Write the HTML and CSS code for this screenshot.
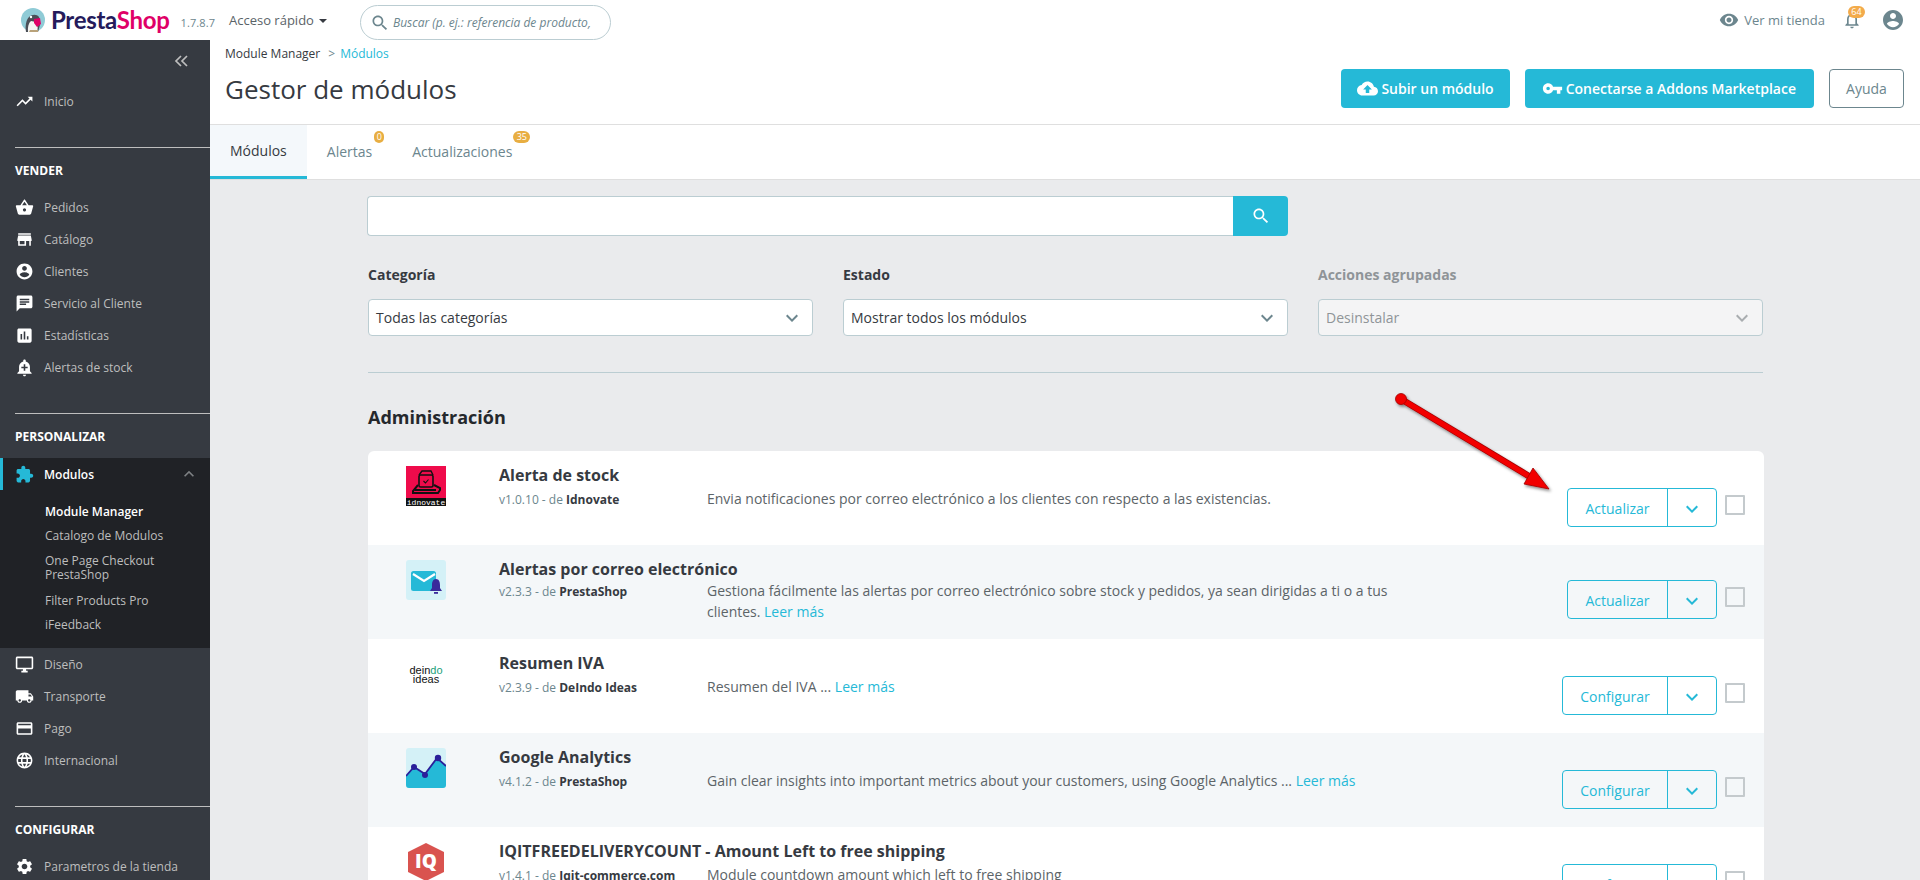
FILE: index.html
```html
<!DOCTYPE html>
<html lang="es">
<head>
<meta charset="utf-8">
<title>Gestor de módulos</title>
<link rel="stylesheet" href="styles.css">
</head>
<body>
<svg class="sprite" width="0" height="0" aria-hidden="true">
  <symbol id="i-trend" viewBox="0 0 24 24"><path d="M16 6l2.29 2.29-4.88 4.88-4-4L2 16.59 3.41 18l6-6 4 4 6.3-6.29L22 12V6z"/></symbol>
  <symbol id="i-basket" viewBox="0 0 24 24"><path d="M17.21 9l-4.38-6.56c-.19-.28-.51-.42-.83-.42-.32 0-.64.14-.83.43L6.79 9H2c-.55 0-1 .45-1 1 0 .09.01.18.04.27l2.54 9.27c.23.84 1 1.46 1.92 1.46h13c.92 0 1.69-.62 1.93-1.46l2.54-9.27L23 10c0-.55-.45-1-1-1h-4.79zM9 9l3-4.4L15 9H9zm3 8c-1.1 0-2-.9-2-2s.9-2 2-2 2 .9 2 2-.9 2-2 2z"/></symbol>
  <symbol id="i-store" viewBox="0 0 24 24"><path d="M20 4H4v2h16V4zm1 10v-2l-1-5H4l-1 5v2h1v6h10v-6h4v6h2v-6h1zm-9 4H6v-4h6v4z"/></symbol>
  <symbol id="i-account" viewBox="0 0 24 24"><path d="M12 2C6.48 2 2 6.48 2 12s4.48 10 10 10 10-4.48 10-10S17.52 2 12 2zm0 3c1.66 0 3 1.34 3 3s-1.34 3-3 3-3-1.34-3-3 1.34-3 3-3zm0 14.2c-2.5 0-4.71-1.28-6-3.22.03-1.99 4-3.08 6-3.08 1.99 0 5.97 1.09 6 3.08-1.29 1.94-3.5 3.22-6 3.22z"/></symbol>
  <symbol id="i-chat" viewBox="0 0 24 24"><path d="M20 2H4c-1.1 0-1.99.9-1.99 2L2 22l4-4h14c1.1 0 2-.9 2-2V4c0-1.1-.9-2-2-2zM6 9h12v2H6V9zm8 5H6v-2h8v2zm4-6H6V6h12v2z"/></symbol>
  <symbol id="i-stats" viewBox="0 0 24 24"><path d="M19 3H5c-1.1 0-2 .9-2 2v14c0 1.1.9 2 2 2h14c1.1 0 2-.9 2-2V5c0-1.1-.9-2-2-2zM9 17H7v-7h2v7zm4 0h-2V7h2v10zm4 0h-2v-4h2v4z"/></symbol>
  <symbol id="i-alert" viewBox="0 0 24 24"><path d="M10.01 21.01c0 1.1.89 1.99 1.99 1.99s1.99-.89 1.99-1.99h-3.98zm8.87-4.19V11c0-3.25-2.25-5.97-5.29-6.69v-.72C13.59 2.71 12.88 2 12 2s-1.59.71-1.59 1.59v.72C7.37 5.03 5.12 7.75 5.12 11v5.82L3 18.94V20h18v-1.06l-2.12-2.12zM16 13.01h-3v3h-2v-3H8V11h3V8h2v3h3v2.01z"/></symbol>
  <symbol id="i-puzzle" viewBox="0 0 24 24"><path d="M20.5 11H19V7c0-1.1-.9-2-2-2h-4V3.5C13 2.12 11.88 1 10.5 1S8 2.12 8 3.5V5H4c-1.1 0-1.99.9-1.99 2v3.8H3.5c1.49 0 2.7 1.21 2.7 2.7s-1.21 2.7-2.7 2.7H2V20c0 1.1.9 2 2 2h3.8v-1.5c0-1.49 1.21-2.7 2.7-2.7 1.49 0 2.7 1.21 2.7 2.7V22H17c1.1 0 2-.9 2-2v-4h1.5c1.38 0 2.5-1.12 2.5-2.5S21.88 11 20.5 11z"/></symbol>
  <symbol id="i-desktop" viewBox="0 0 24 24"><path d="M21 2H3c-1.1 0-2 .9-2 2v12c0 1.1.9 2 2 2h7v2H8v2h8v-2h-2v-2h7c1.1 0 2-.9 2-2V4c0-1.1-.9-2-2-2zm0 14H3V4h18v12z"/></symbol>
  <symbol id="i-truck" viewBox="0 0 24 24"><path d="M20 8h-3V4H3c-1.1 0-2 .9-2 2v11h2c0 1.66 1.34 3 3 3s3-1.34 3-3h6c0 1.66 1.34 3 3 3s3-1.34 3-3h2v-5l-3-4zM6 18.5c-.83 0-1.5-.67-1.5-1.5s.67-1.5 1.5-1.5 1.5.67 1.5 1.5-.67 1.5-1.5 1.5zm13.5-9l1.96 2.5H17V9.5h2.5zm-1.5 9c-.83 0-1.5-.67-1.5-1.5s.67-1.5 1.5-1.5 1.5.67 1.5 1.5-.67 1.5-1.5 1.5z"/></symbol>
  <symbol id="i-card" viewBox="0 0 24 24"><path d="M20 4H4c-1.11 0-1.99.89-1.99 2L2 18c0 1.11.89 2 2 2h16c1.11 0 2-.89 2-2V6c0-1.11-.89-2-2-2zm0 14H4v-6h16v6zm0-10H4V6h16v2z"/></symbol>
  <symbol id="i-globe" viewBox="0 0 24 24"><path d="M11.99 2C6.47 2 2 6.48 2 12s4.47 10 9.99 10C17.52 22 22 17.52 22 12S17.52 2 11.99 2zm6.93 6h-2.95c-.32-1.25-.78-2.45-1.38-3.56 1.84.63 3.37 1.91 4.33 3.56zM12 4.04c.83 1.2 1.48 2.53 1.91 3.96h-3.82c.43-1.43 1.08-2.76 1.91-3.96zM4.26 14C4.1 13.36 4 12.69 4 12s.1-1.36.26-2h3.38c-.08.66-.14 1.32-.14 2 0 .68.06 1.34.14 2H4.26zm.82 2h2.95c.32 1.25.78 2.45 1.38 3.56-1.84-.63-3.37-1.9-4.33-3.56zm2.95-8H5.08c.96-1.66 2.49-2.93 4.33-3.56C8.81 5.55 8.35 6.75 8.03 8zM12 19.96c-.83-1.2-1.48-2.53-1.91-3.96h3.82c-.43 1.43-1.08 2.76-1.91 3.96zM14.34 14H9.66c-.09-.66-.16-1.32-.16-2 0-.68.07-1.35.16-2h4.68c.09.65.16 1.32.16 2 0 .68-.07 1.34-.16 2zm.25 5.56c.6-1.11 1.06-2.31 1.38-3.56h2.95c-.96 1.65-2.49 2.93-4.33 3.56zM16.36 14c.08-.66.14-1.32.14-2 0-.68-.06-1.34-.14-2h3.38c.16.64.26 1.31.26 2s-.1 1.36-.26 2h-3.38z"/></symbol>
  <symbol id="i-gear" viewBox="0 0 24 24"><path d="M19.14 12.94c.04-.3.06-.61.06-.94 0-.32-.02-.64-.07-.94l2.03-1.58c.18-.14.23-.41.12-.61l-1.92-3.32c-.12-.22-.37-.29-.59-.22l-2.39.96c-.5-.38-1.03-.7-1.62-.94l-.36-2.54c-.04-.24-.24-.41-.48-.41h-3.84c-.24 0-.43.17-.47.41l-.36 2.54c-.59.24-1.13.57-1.62.94l-2.39-.96c-.22-.08-.47 0-.59.22L2.74 8.87c-.12.21-.08.47.12.61l2.03 1.58c-.05.3-.09.63-.09.94s.02.64.07.94l-2.03 1.58c-.18.14-.23.41-.12.61l1.92 3.32c.12.22.37.29.59.22l2.39-.96c.5.38 1.03.7 1.62.94l.36 2.54c.05.24.24.41.48.41h3.84c.24 0 .44-.17.47-.41l.36-2.54c.59-.24 1.13-.56 1.62-.94l2.39.96c.22.08.47 0 .59-.22l1.92-3.32c.12-.22.07-.47-.12-.61l-2.01-1.58zM12 15.6c-1.98 0-3.6-1.62-3.6-3.6s1.62-3.6 3.6-3.6 3.6 1.62 3.6 3.6-1.62 3.6-3.6 3.6z"/></symbol>
  <symbol id="i-cloud" viewBox="0 0 24 24"><path d="M19.35 10.04C18.67 6.59 15.64 4 12 4 9.11 4 6.6 5.64 5.35 8.04 2.34 8.36 0 10.91 0 14c0 3.31 2.69 6 6 6h13c2.76 0 5-2.24 5-5 0-2.64-2.05-4.78-4.65-4.96zM14 13v4h-4v-4H7l5-5 5 5h-3z"/></symbol>
  <symbol id="i-key" viewBox="0 0 24 24"><path d="M12.65 10C11.83 7.67 9.61 6 7 6c-3.31 0-6 2.69-6 6s2.69 6 6 6c2.61 0 4.83-1.67 5.65-4H17v4h4v-4h2v-4H12.65zM7 14c-1.1 0-2-.9-2-2s.9-2 2-2 2 .9 2 2-.9 2-2 2z"/></symbol>
  <symbol id="i-eye" viewBox="0 0 24 24"><path d="M12 4.5C7 4.5 2.73 7.61 1 12c1.73 4.39 6 7.5 11 7.5s9.27-3.11 11-7.5c-1.73-4.39-6-7.5-11-7.5zM12 17c-2.76 0-5-2.24-5-5s2.24-5 5-5 5 2.24 5 5-2.24 5-5 5zm0-8c-1.66 0-3 1.34-3 3s1.34 3 3 3 3-1.34 3-3-1.34-3-3-3z"/></symbol>
  <symbol id="i-bell" viewBox="0 0 24 24"><path d="M12 22c1.1 0 2-.9 2-2h-4c0 1.1.9 2 2 2zm6-6v-5c0-3.07-1.63-5.64-4.5-6.32V4c0-.83-.67-1.5-1.5-1.5s-1.5.67-1.5 1.5v.68C7.64 5.36 6 7.92 6 11v5l-2 2v1h16v-1l-2-2zm-2 1H8v-6c0-2.48 1.51-4.5 4-4.5s4 2.02 4 4.5v6z"/></symbol>
  <symbol id="i-search" viewBox="0 0 24 24"><path d="M15.5 14h-.79l-.28-.27C15.41 12.59 16 11.11 16 9.5 16 5.91 13.09 3 9.5 3S3 5.91 3 9.5 5.91 16 9.5 16c1.61 0 3.09-.59 4.23-1.57l.27.28v.79l5 4.99L20.49 19l-4.99-5zm-6 0C7.01 14 5 11.99 5 9.5S7.01 5 9.5 5 14 7.01 14 9.5 11.99 14 9.5 14z"/></symbol>
  <symbol id="i-down" viewBox="0 0 24 24"><path d="M7.41 8.59L12 13.17l4.59-4.58L18 10l-6 6-6-6z"/></symbol>
  <symbol id="i-up" viewBox="0 0 24 24"><path d="M7.41 15.41L12 10.83l4.59 4.58L18 14l-6-6-6 6z"/></symbol>
</svg>

<header class="topbar">
  <div class="brand">
    <svg class="bird" viewBox="0 0 24 24" aria-hidden="true">
      <circle cx="12" cy="12" r="12" fill="#8fcbd6"/>
      <path d="M5 24c-1-6 0-12 3-15 3-3 8-3 10 0 1 2 1 5 1 8l-2 7z" fill="#4b4f57"/>
      <path d="M7 24c-.5-5 .5-9 3-11l5 1c2 3 2 7 1 10z" fill="#f4f4f2"/>
      <path d="M13 11l6-1 1 6-4 3-3-4z" fill="#df0067"/>
      <circle cx="10" cy="9" r="1.2" fill="#fff"/>
      <path d="M9 22h8v2H8z" fill="#b9a27a"/>
    </svg>
    <span class="wordmark"><span class="wm-a">Presta</span><span class="wm-b">Shop</span></span>
    <span class="version">1.7.8.7</span>
  </div>
  <div class="quick">Acceso rápido<span class="caret"></span></div>
  <label class="top-search">
    <svg class="ic ic-top-search"><use href="#i-search"/></svg>
    <input class="top-input" type="text" placeholder="Buscar (p. ej.: referencia de producto,">
  </label>
  <div class="top-right">
    <div class="shop-link"><svg class="ic ic-20"><use href="#i-eye"/></svg><span>Ver mi tienda</span></div>
    <div class="bell"><svg class="ic ic-20"><use href="#i-bell"/></svg><span class="bell-badge">64</span></div>
    <svg class="ic ic-user"><use href="#i-account"/></svg>
  </div>
</header>

<div class="shell">
  <nav class="sidebar">
    <div class="collapse">
      <svg class="collapse-ic" viewBox="0 0 16 12" aria-hidden="true"><path d="M7 1L2 6l5 5M13 1L8 6l5 5" fill="none" stroke="#bebebe" stroke-width="1.7"/></svg>
    </div>
    <a class="nav-item"><svg class="ic nav-ic"><use href="#i-trend"/></svg>Inicio</a>

    <div class="nav-title">VENDER</div>
    <a class="nav-item"><svg class="ic nav-ic"><use href="#i-basket"/></svg>Pedidos</a>
    <a class="nav-item"><svg class="ic nav-ic"><use href="#i-store"/></svg>Catálogo</a>
    <a class="nav-item"><svg class="ic nav-ic"><use href="#i-account"/></svg>Clientes</a>
    <a class="nav-item"><svg class="ic nav-ic"><use href="#i-chat"/></svg>Servicio al Cliente</a>
    <a class="nav-item"><svg class="ic nav-ic"><use href="#i-stats"/></svg>Estadísticas</a>
    <a class="nav-item"><svg class="ic nav-ic"><use href="#i-alert"/></svg>Alertas de stock</a>

    <div class="nav-title">PERSONALIZAR</div>
    <div class="nav-open">
      <a class="nav-item nav-active"><svg class="ic nav-ic nav-ic-on"><use href="#i-puzzle"/></svg>Modulos<svg class="ic nav-chev"><use href="#i-up"/></svg></a>
      <ul class="subnav">
        <li class="sub sub-on">Module Manager</li>
        <li class="sub">Catalogo de Modulos</li>
        <li class="sub sub-two">One Page Checkout PrestaShop</li>
        <li class="sub">Filter Products Pro</li>
        <li class="sub">iFeedback</li>
      </ul>
    </div>
    <a class="nav-item"><svg class="ic nav-ic"><use href="#i-desktop"/></svg>Diseño</a>
    <a class="nav-item"><svg class="ic nav-ic"><use href="#i-truck"/></svg>Transporte</a>
    <a class="nav-item"><svg class="ic nav-ic"><use href="#i-card"/></svg>Pago</a>
    <a class="nav-item"><svg class="ic nav-ic"><use href="#i-globe"/></svg>Internacional</a>

    <div class="nav-title">CONFIGURAR</div>
    <a class="nav-item"><svg class="ic nav-ic"><use href="#i-gear"/></svg>Parametros de la tienda</a>
  </nav>

  <main class="main">
    <section class="page-head">
      <div class="head-left">
        <div class="crumbs"><span>Module Manager</span><span class="crumb-sep">&gt;</span><a class="crumb-on">Módulos</a></div>
        <h1 class="title">Gestor de módulos</h1>
      </div>
      <div class="head-actions">
        <a class="btn-solid"><svg class="ic ic-btn"><use href="#i-cloud"/></svg>Subir un módulo</a>
        <a class="btn-solid btn-wide"><svg class="ic ic-btn"><use href="#i-key"/></svg>Conectarse a Addons Marketplace</a>
        <a class="btn-outline">Ayuda</a>
      </div>
    </section>

    <section class="tabs">
      <a class="tab tab-on">Módulos</a>
      <a class="tab">Alertas<span class="tab-badge tab-badge-s">0</span></a>
      <a class="tab">Actualizaciones<span class="tab-badge">35</span></a>
    </section>

    <section class="content">
      <div class="search-row">
        <input class="search-input" type="text" aria-label="Buscar">
        <button class="search-btn" aria-label="Buscar"><svg class="ic ic-20"><use href="#i-search"/></svg></button>
      </div>

      <div class="filters">
        <div class="filter">
          <div class="filter-label">Categoría</div>
          <div class="select"><span>Todas las categorías</span><svg class="ic sel-chev"><use href="#i-down"/></svg></div>
        </div>
        <div class="filter">
          <div class="filter-label">Estado</div>
          <div class="select"><span>Mostrar todos los módulos</span><svg class="ic sel-chev"><use href="#i-down"/></svg></div>
        </div>
        <div class="filter filter-off">
          <div class="filter-label">Acciones agrupadas</div>
          <div class="select"><span>Desinstalar</span><svg class="ic sel-chev"><use href="#i-down"/></svg></div>
        </div>
      </div>

      <h2 class="group-title">Administración</h2>

      <div class="mods">
        <article class="mod">
          <svg class="mod-logo" viewBox="0 0 40 40" aria-hidden="true">
            <rect width="40" height="40" fill="#ef0b4b"/>
            <rect y="32" width="40" height="8" fill="#111"/>
            <rect x="13" y="9" width="14" height="12" rx="1.500" fill="none" stroke="#111" stroke-width="1.600"/>
            <path d="M13 9l3-4h9l2 4" fill="none" stroke="#111" stroke-width="1.400"/>
            <path d="M17.500 15l2 2 3-3.500" fill="none" stroke="#111" stroke-width="1.100"/>
            <path d="M12 19l-5 6v2h25l2-3v-2l-6-3M9 24h21" fill="none" stroke="#111" stroke-width="2"/>
            <text x="20" y="38.600" class="logo-idn">idnovate</text>
          </svg>
          <div class="mod-body">
            <h3 class="mod-name">Alerta de stock</h3>
            <div class="mod-sub">
              <div class="mod-ver">v1.0.10 - de <b>Idnovate</b></div>
              <p class="mod-desc">Envia notificaciones por correo electrónico a los clientes con respecto a las existencias.</p>
            </div>
          </div>
          <div class="mod-act">
            <div class="split"><a class="split-main split-up">Actualizar</a><a class="split-more"><svg class="ic split-chev"><use href="#i-down"/></svg></a></div>
            <span class="check"></span>
          </div>
        </article>

        <article class="mod mod-alt mod-tight">
          <svg class="mod-logo" viewBox="0 0 40 40" aria-hidden="true">
            <rect width="40" height="40" rx="3" fill="#d4f1f7"/>
            <rect x="5" y="11" width="25" height="20" rx="2.500" fill="#25b9d7"/>
            <path d="M7 14l11 7 11-7" fill="none" stroke="#fff" stroke-width="2.200"/>
            <path d="M30 19c3 0 4 3 4 6v3l2 3H24l2-3v-3c0-3 1-6 4-6z" fill="#3a2a9b"/>
            <rect x="28" y="32" width="4" height="1.800" fill="#3a2a9b"/>
          </svg>
          <div class="mod-body">
            <h3 class="mod-name">Alertas por correo electrónico</h3>
            <div class="mod-sub">
              <div class="mod-ver">v2.3.3 - de <b>PrestaShop</b></div>
              <p class="mod-desc">Gestiona fácilmente las alertas por correo electrónico sobre stock y pedidos, ya sean dirigidas a ti o a tus clientes. <a class="more">Leer más</a></p>
            </div>
          </div>
          <div class="mod-act">
            <div class="split"><a class="split-main split-up">Actualizar</a><a class="split-more"><svg class="ic split-chev"><use href="#i-down"/></svg></a></div>
            <span class="check"></span>
          </div>
        </article>

        <article class="mod">
          <svg class="mod-logo" viewBox="0 0 40 40" aria-hidden="true">
            <text x="20" y="20" class="logo-dei">dein<tspan class="logo-dei-g">do</tspan></text>
            <text x="20" y="28.500" class="logo-dei">ideas</text>
          </svg>
          <div class="mod-body">
            <h3 class="mod-name">Resumen IVA</h3>
            <div class="mod-sub">
              <div class="mod-ver">v2.3.9 - de <b>DeIndo Ideas</b></div>
              <p class="mod-desc">Resumen del IVA ... <a class="more">Leer más</a></p>
            </div>
          </div>
          <div class="mod-act">
            <div class="split"><a class="split-main">Configurar</a><a class="split-more"><svg class="ic split-chev"><use href="#i-down"/></svg></a></div>
            <span class="check"></span>
          </div>
        </article>

        <article class="mod mod-alt">
          <svg class="mod-logo" viewBox="0 0 40 40" aria-hidden="true">
            <rect width="40" height="40" rx="3" fill="#d4f1f7"/>
            <path d="M0 28l8-9 11 7 12-16 9 8v19a3 3 0 0 1-3 3H3a3 3 0 0 1-3-3z" fill="#25b9d7"/>
            <path d="M0 28l8-9 11 7 12-16 9 8" fill="none" stroke="#2a1f9a" stroke-width="1.800"/>
            <circle cx="8" cy="19" r="3" fill="#2a1f9a"/><circle cx="19" cy="27" r="3" fill="#2a1f9a"/><circle cx="32" cy="10" r="3.200" fill="#2a1f9a"/>
          </svg>
          <div class="mod-body">
            <h3 class="mod-name">Google Analytics</h3>
            <div class="mod-sub">
              <div class="mod-ver">v4.1.2 - de <b>PrestaShop</b></div>
              <p class="mod-desc">Gain clear insights into important metrics about your customers, using Google Analytics ... <a class="more">Leer más</a></p>
            </div>
          </div>
          <div class="mod-act">
            <div class="split"><a class="split-main">Configurar</a><a class="split-more"><svg class="ic split-chev"><use href="#i-down"/></svg></a></div>
            <span class="check"></span>
          </div>
        </article>

        <article class="mod">
          <svg class="mod-logo" viewBox="0 0 40 40" aria-hidden="true">
            <path d="M20 1l18 9v20l-18 9-18-9V10z" fill="#d9534f"/>
            <text x="20" y="26" class="logo-iq">IQ</text>
          </svg>
          <div class="mod-body">
            <h3 class="mod-name">IQITFREEDELIVERYCOUNT - Amount Left to free shipping</h3>
            <div class="mod-sub">
              <div class="mod-ver">v1.4.1 - de <b>Iqit-commerce.com</b></div>
              <p class="mod-desc">Module countdown amount which left to free shipping</p>
            </div>
          </div>
          <div class="mod-act">
            <div class="split"><a class="split-main">Configurar</a><a class="split-more"><svg class="ic split-chev"><use href="#i-down"/></svg></a></div>
            <span class="check"></span>
          </div>
        </article>
      </div>
    </section>
  </main>
</div>

<svg class="arrow" viewBox="0 0 1920 880" aria-hidden="true">
  <defs><filter id="ashadow" x="-10%" y="-10%" width="120%" height="120%"><feDropShadow dx="1.500" dy="2" stdDeviation="1.500" flood-color="#000" flood-opacity=".45"/></filter></defs>
  <g filter="url(#ashadow)">
    <path d="M1401 399L1532 478" stroke="#a00000" stroke-width="6.500" fill="none"/>
    <path d="M1401 399L1532 478" stroke="#f20000" stroke-width="5" fill="none"/>
    <circle cx="1401" cy="399" r="5.500" fill="#f20000" stroke="#a00000" stroke-width=".8"/>
    <path d="M1549 489L1533 468L1524 484z" fill="#f20000" stroke="#a00000" stroke-width=".8"/>
  </g>
</svg>
</body>
</html>
```

FILE: styles.css
```css
* { box-sizing: border-box; }
html, body { margin: 0; height: 880px; overflow: hidden; }
body {
  position: relative;
  font-family: "Open Sans", "Liberation Sans", sans-serif;
  font-size: 14px;
  color: #363a41;
  background: #eaebed;
}
h1, h2, h3, p, ul { margin: 0; padding: 0; }
ul { list-style: none; }
a { color: inherit; text-decoration: none; }
.sprite { position: absolute; }
.ic { fill: currentColor; flex: none; display: block; }
.ic-20 { width: 20px; height: 20px; }

/* top bar */
.topbar {
  height: 40px;
  background: #fff;
  display: flex;
  align-items: flex-start;
  position: relative;
}
.brand { display: flex; align-items: center; height: 40px; padding-left: 21px; width: 229px; flex: none; }
.bird { width: 24px; height: 24px; flex: none; }
.wordmark { font-family: "Lato", sans-serif; font-size: 24px; font-weight: 700; letter-spacing: -.3px; margin-left: 6px; line-height: 1; }
.wm-a { color: #251b5b; }
.wm-b { color: #df0067; }
.version { font-size: 11px; color: #6c868e; margin-left: 11px; margin-top: 4px; letter-spacing: .1px; }
.quick { height: 40px; display: flex; align-items: center; font-size: 13px; width: 131px; flex: none; padding-bottom: 1px; color: #5a6367; }
.caret { border: 4px solid transparent; border-top: 4px solid #363a41; border-bottom: 0; margin-left: 5px; margin-top: 2px; }
.top-search {
  margin-top: 5px; width: 251px; height: 35px; flex: none;
  border: 1px solid #bbcdd2; border-radius: 18px;
  display: flex; align-items: center; padding-left: 9px; overflow: hidden;
}
.ic-top-search { width: 20px; height: 20px; color: #6c868e; }
.top-input {
  border: 0; outline: 0; background: none; flex: 1; min-width: 0; margin-left: 3px; padding: 0;
  font: italic 12px "Open Sans", sans-serif;
}
.top-input::placeholder { color: #6c868e; opacity: 1; }
.top-right { margin-left: auto; display: flex; align-items: center; height: 40px; color: #6c868e; padding-right: 15px; }
.shop-link { display: flex; align-items: center; gap: 5px; font-size: 13px; color: #6c868e; }
.bell { position: relative; margin-left: 17px; }
.bell-badge {
  position: absolute; left: 6px; top: -4px; width: 17px; height: 12px; border-radius: 6px;
  background: #f3ab4b; color: #fff; font-size: 9px; line-height: 12px; text-align: center;
}
.ic-user { width: 24px; height: 24px; margin-left: 19px; }

/* shell */
.shell { display: flex; height: 840px; }
.sidebar { width: 210px; flex: none; background: #363a41; color: #bebebe; font-size: 12px; padding-top: 45px; position: relative; }
.collapse { position: absolute; right: 20px; top: 15px; }
.collapse-ic { width: 16px; height: 12px; display: block; }
.nav-item { display: flex; align-items: center; height: 32px; padding-left: 15px; position: relative; }
.nav-ic { width: 19px; height: 19px; margin-right: 10px; color: #fff; }
.nav-title {
  margin: 30px 0 0 15px; height: 44px; padding-top: 2px; border-top: 1px solid #bebebe;
  color: #fff; font-weight: 700; font-size: 12px; display: flex; align-items: center;
}
.nav-open { background: #202226; margin-top: 1px; padding-bottom: 11px; }
.nav-active { color: #fff; font-weight: 600; border-left: 3px solid #25b9d7; padding-left: 12px; }
.nav-ic-on { color: #25b9d7; }
.nav-chev { width: 20px; height: 20px; margin-left: auto; margin-right: 11px; color: #7d8083; }
.subnav { padding-top: 10px; }
.sub { padding: 5px 20px 5px 45px; line-height: 14px; }
.sub-on { color: #fff; font-weight: 600; }
.sub-two { margin: 1px 0 2px; }

/* main */
.main { flex: 1; min-width: 0; }
.page-head {
  height: 85px; background: #fff; border-bottom: 1px solid #dfdfdf;
  display: flex; justify-content: space-between; padding: 0 16px 0 15px;
}
.crumbs { font-size: 12px; line-height: 16px; padding-top: 6px; }
.crumb-sep { margin: 0 5px 0 8px; color: #6c868e; }
.crumb-on { color: #25b9d7; font-weight: 400; }
.title { font-size: 26px; font-weight: 400; line-height: 36px; margin-top: 9px; color: #363a41; }
.head-actions { display: flex; gap: 15px; padding-top: 29px; height: 68px; }
.btn-solid {
  background: #25b9d7; color: #fff; font-weight: 600; border-radius: 4px;
  display: flex; align-items: center; padding: 0 16px; height: 39px; font-size: 14px;
}
.btn-wide { padding: 0 18px 0 17px; }
.ic-btn { width: 21px; height: 21px; margin-right: 3px; }
.btn-outline {
  border: 1px solid #6c868e; border-radius: 4px; height: 39px; width: 75px;
  display: flex; align-items: center; justify-content: center; color: #6c868e; background: #fff;
}
.tabs { height: 55px; background: #fff; border-bottom: 1px solid #dfdfdf; display: flex; }
.tab { padding: 0 20px 2px; height: 54px; display: flex; align-items: center; color: #6c868e; position: relative; }
.tab-on { background: #f4f8fb; color: #363a41; border-bottom: 3px solid #25b9d7; padding-bottom: 0; }
.tab-badge {
  position: absolute; right: 2px; top: 6px; min-width: 17px; height: 12px; border-radius: 6px;
  background: #e8ae42; color: #fff; font-size: 9px; line-height: 12px; text-align: center;
}
.tab-badge-s { min-width: 10px; right: 8px; }

.content { padding: 16px 157px 0 158px; }
.search-row { display: flex; width: 921px; height: 40px; margin-left: -1px; }
.search-input { flex: 1; border: 1px solid #bbcdd2; border-right: 0; border-radius: 4px 0 0 4px; background: #fff; outline: 0; }
.search-btn { width: 55px; border: 0; border-radius: 0 4px 4px 0; background: #25b9d7; color: #fff; display: flex; align-items: center; justify-content: center; padding: 0; }
.filters {
  display: grid; grid-template-columns: repeat(3, 445px); column-gap: 30px;
  margin-top: 29px; padding-bottom: 36px; border-bottom: 1px solid #bbcdd2;
}
.filter-label { font-weight: 700; line-height: 20px; margin-bottom: 14px; color: #363a41; }
.select {
  height: 37px; background: #fff; border: 1px solid #bbcdd2; border-radius: 4px;
  display: flex; align-items: center; justify-content: space-between; padding: 0 8px 0 7px; color: #363a41; font-size: 14px;
}
.sel-chev { width: 24px; height: 24px; color: #6c868e; }
.filter-off .filter-label { color: #8f9498; }
.filter-off .select { background: #f4f4f5; color: #8f9498; }
.filter-off .sel-chev { color: #a9adb0; }
.group-title { font-size: 18px; font-weight: 700; line-height: 24px; margin-top: 32px; color: #25282c; }
.mods { margin-top: 22px; width: 1396px; border-radius: 6px 6px 0 0; overflow: hidden; }
.mod { height: 94px; background: #fff; display: flex; align-items: flex-start; padding: 15px 19px 0 38px; }
.mod-alt { background: #f4f7f9; }
.mod-logo { width: 40px; height: 40px; flex: none; display: block; }
.mod-body { margin-left: 53px; flex: 1; min-width: 0; }
.mod-name { font-size: 16px; font-weight: 700; line-height: 18px; color: #363a41; white-space: nowrap; }
.mod-sub { display: flex; margin-top: 6px; }
.mod-ver { width: 208px; flex: none; font-size: 12px; line-height: 20px; color: #6c868e; }
.mod-ver b { color: #363a41; font-weight: 700; }
.mod-desc { width: 690px; flex: none; font-size: 14px; line-height: 21px; color: #5c6468; margin-top: -2px; }
.more { color: #25b9d7; }
.mod-tight .mod-sub { margin-top: 4px; }
.mod-act { display: flex; align-items: flex-start; padding-top: 22px; flex: none; }
.mod-tight .mod-act { padding-top: 20px; }
.split { display: flex; height: 39px; border: 1px solid #25b9d7; border-radius: 4px; color: #25b9d7; }
.split-main { width: 105px; display: flex; align-items: center; justify-content: center; border-right: 1px solid #25b9d7; padding-top: 1px; }
.split-up { width: 100px; }
.split-more { width: 48px; display: flex; align-items: center; justify-content: center; }
.split-chev { width: 24px; height: 24px; margin-top: 3px; }
.check { width: 20px; height: 20px; border: 2px solid #c4cacd; margin: 7px 0 0 8px; display: block; border-radius: 1px; }

.logo-idn { font: 8px "Liberation Mono", monospace; fill: #fff; text-anchor: middle; }
.logo-dei { font: 400 11px "Liberation Sans", sans-serif; fill: #111; text-anchor: middle; }
.logo-dei-g { fill: #1ca07a; }
.logo-iq { font: 800 19px "Open Sans", sans-serif; fill: #fff; text-anchor: middle; }

.arrow { position: absolute; left: 0; top: 0; width: 1920px; height: 880px; pointer-events: none; }
```
